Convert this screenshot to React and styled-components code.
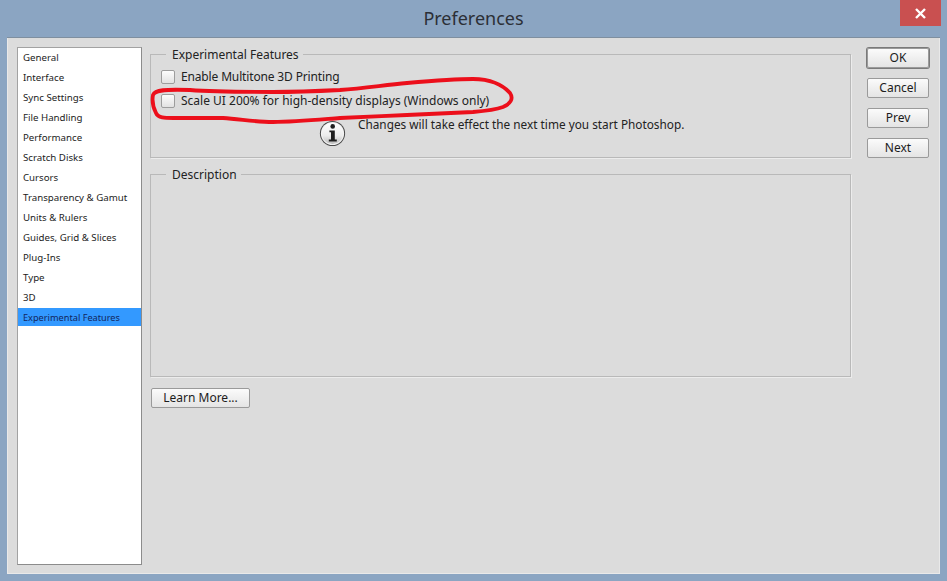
import React from "react";
import styled, { createGlobalStyle } from "styled-components";

const GlobalStyles = createGlobalStyle`
  html, body {
    margin: 0;
    padding: 0;
    background: #8ba5c2;
  }
`;

const Page = styled.div`
  position: relative;
  width: 947px;
  height: 581px;
  overflow: hidden;
  display: flex;
  flex-direction: column;
  background: #8ba5c2;
  font-family: "Noto Sans", "Open Sans", sans-serif;
  color: #1c1c1c;
`;

const TitleBar = styled.div`
  height: 37px;
  flex: none;
  display: grid;
  grid-template-columns: 1fr auto 1fr;
  box-sizing: border-box;
`;

const Title = styled.div`
  grid-column: 2;
  font-size: 18px;
  line-height: 36px;
  color: #2b2f36;
`;

const CloseButton = styled.div`
  grid-column: 3;
  justify-self: end;
  width: 41px;
  height: 26px;
  margin-right: 6px;
  background: #c95050;
  display: flex;
  align-items: center;
  justify-content: center;
`;

const Dialog = styled.div`
  flex: none;
  height: 537px;
  margin: 0 7px;
  box-sizing: border-box;
  padding: 9px 10px 9px 10px;
  display: flex;
  background: #dcdcdc;
  border-top: 1px solid #7f8f9f;
  box-shadow: inset 1px 0 0 #e9e9e9, inset -1px 0 0 #e9e9e9, inset 0 -1px 0 #e9e9e9;
`;

const CategoryList = styled.ul`
  list-style: none;
  margin: 0 8px 0 0;
  padding: 0;
  width: 125px;
  box-sizing: border-box;
  flex: none;
  display: flex;
  flex-direction: column;
  gap: 2px;
  background: #fff;
  border: 1px solid #a2a2a2;
  border-right-color: #8c8c8c;
  border-bottom-color: #8c8c8c;
`;

const CategoryItem = styled.li`
  height: 18px;
  line-height: 20px;
  padding-left: 5px;
  font-size: ${(p) => (p.$selected ? "9.2px" : "9.7px")};
  white-space: nowrap;
  background: ${(p) => (p.$selected ? "#3399ff" : "transparent")};
  color: ${(p) => (p.$selected ? "#12265e" : "#1c1c1c")};
`;

const MainColumn = styled.div`
  width: 701px;
  flex: none;
  display: flex;
  flex-direction: column;
`;

const Group = styled.fieldset`
  margin: 0;
  padding: 4px 10px 0;
  box-sizing: border-box;
  height: ${(p) => p.$height}px;
  min-width: 0;
  border: 1px solid #b9b9b9;
  border-radius: 0;
  box-shadow: 1px 1px 0 #ececec;
  & + & {
    margin-top: 9px;
  }
`;

const GroupTitle = styled.legend`
  margin-left: 5px;
  padding: 0 4px 0 6px;
  font-size: 12px;
  line-height: 15px;
  color: #222;
`;

const CheckRow = styled.label`
  height: 21px;
  display: flex;
  align-items: center;
  gap: 6px;
  font-size: 12px;
  letter-spacing: ${(p) => p.$tracking || 0}px;
  color: #222;
  & + & {
    margin-top: 3px;
  }
`;

const CheckBox = styled.span`
  width: 14px;
  height: 14px;
  box-sizing: border-box;
  flex: none;
  border: 1px solid #9d9d9d;
  border-radius: 2px;
  background: linear-gradient(#fdfdfd, #e2e2e2);
`;

const Note = styled.div`
  display: flex;
  margin: 6px 0 0 158px;
  gap: 12px;
  font-size: 11.8px;
  line-height: 15px;
  color: #222;
`;

const NoteIcon = styled.svg`
  flex: none;
  width: 27px;
  height: 27px;
  margin-top: 3px;
`;

const Button = styled.div`
  box-sizing: border-box;
  width: ${(p) => p.$width || 62}px;
  height: 20px;
  padding-bottom: 2px;
  display: flex;
  align-items: center;
  justify-content: center;
  font-size: 12px;
  color: #1c1c1c;
  border: 1px solid #9a9a9a;
  border-radius: 2px;
  background: linear-gradient(#fbfbfb, #e4e4e4);
  box-shadow: ${(p) => (p.$primary ? "0 0 0 1px #7a7a7a" : "none")};
`;

const LearnMore = styled(Button)`
  margin: 11px 0 0 1px;
`;

const ButtonColumn = styled.div`
  margin: 1px 0 0 16px;
  display: flex;
  flex-direction: column;
  gap: 10px;
`;

// the hand drawn marker circle sits on top of the dialog
const Scribble = styled.svg`
  position: absolute;
  left: 0;
  top: 0;
  width: 947px;
  height: 581px;
  pointer-events: none;
`;

const categories = [
  "General",
  "Interface",
  "Sync Settings",
  "File Handling",
  "Performance",
  "Scratch Disks",
  "Cursors",
  "Transparency & Gamut",
  "Units & Rulers",
  "Guides, Grid & Slices",
  "Plug-Ins",
  "Type",
  "3D",
  "Experimental Features",
];

const App = () => (
  <Page>
    <GlobalStyles />
    <TitleBar>
      <Title>Preferences</Title>
      <CloseButton>
        <svg width="11" height="11" viewBox="0 0 11 11">
          <path d="M1 1 L10 10 M10 1 L1 10" stroke="#fff" strokeWidth="2.4" />
        </svg>
      </CloseButton>
    </TitleBar>
    <Dialog>
      <CategoryList>
        {categories.map((name, i) => (
          <CategoryItem key={name} $selected={i === categories.length - 1}>
            {name}
          </CategoryItem>
        ))}
      </CategoryList>
      <MainColumn>
        <Group $height={111}>
          <GroupTitle>Experimental Features</GroupTitle>
          <CheckRow $tracking={-0.15}>
            <CheckBox />
            Enable Multitone 3D Printing
          </CheckRow>
          <CheckRow>
            <CheckBox />
            Scale UI 200% for high-density displays (Windows only)
          </CheckRow>
          <Note>
            <NoteIcon viewBox="0 0 27 27">
              <defs>
                <linearGradient id="infoFill" x1="0" y1="0" x2="0" y2="1">
                  <stop offset="0" stopColor="#ffffff" />
                  <stop offset="0.6" stopColor="#ececec" />
                  <stop offset="1" stopColor="#bcbcbc" />
                </linearGradient>
              </defs>
              <circle cx="13.5" cy="13.5" r="12.6" fill="#4a4a4a" />
              <circle cx="13.5" cy="13.5" r="11.6" fill="#f4f4f4" />
              <circle cx="13.5" cy="13.5" r="10.6" fill="url(#infoFill)" />
              <circle cx="13.7" cy="6.4" r="2.3" fill="#1e1e1e" />
              <path d="M10.4 10.4 H15.8 V19.6 H17.8 V21.6 H9.8 V19.6 H12 V12.3 H10.4 Z" fill="#1e1e1e" />
            </NoteIcon>
            Changes will take effect the next time you start Photoshop.
          </Note>
        </Group>
        <Group $height={210}>
          <GroupTitle>Description</GroupTitle>
        </Group>
        <LearnMore $width={99}>Learn More...</LearnMore>
      </MainColumn>
      <ButtonColumn>
        <Button $primary>OK</Button>
        <Button>Cancel</Button>
        <Button>Prev</Button>
        <Button>Next</Button>
      </ButtonColumn>
    </Dialog>
    <Scribble viewBox="0 0 947 581">
      <path
        d="M153 95 C155 90 165 89 190 90 C215 92 250 92 273 92 C300 92 320 91 340 90 C365 88 385 85 407 83 C430 81 455 79 473 79 C490 79 503 85 510 93 C514 99 510 104 503 107 C495 110 485 111 473 112 C450 113 430 114 407 115 C385 116 360 117 340 118 C315 120 295 122 273 122 C255 122 240 119 223 118 C205 118 190 118 173 118 C165 118 158 118 156 113 C153 107 152 100 153 95 Z"
        fill="none"
        stroke="#ec0f1b"
        strokeWidth="3.8"
        strokeLinejoin="round"
      />
    </Scribble>
  </Page>
);

export default App;
